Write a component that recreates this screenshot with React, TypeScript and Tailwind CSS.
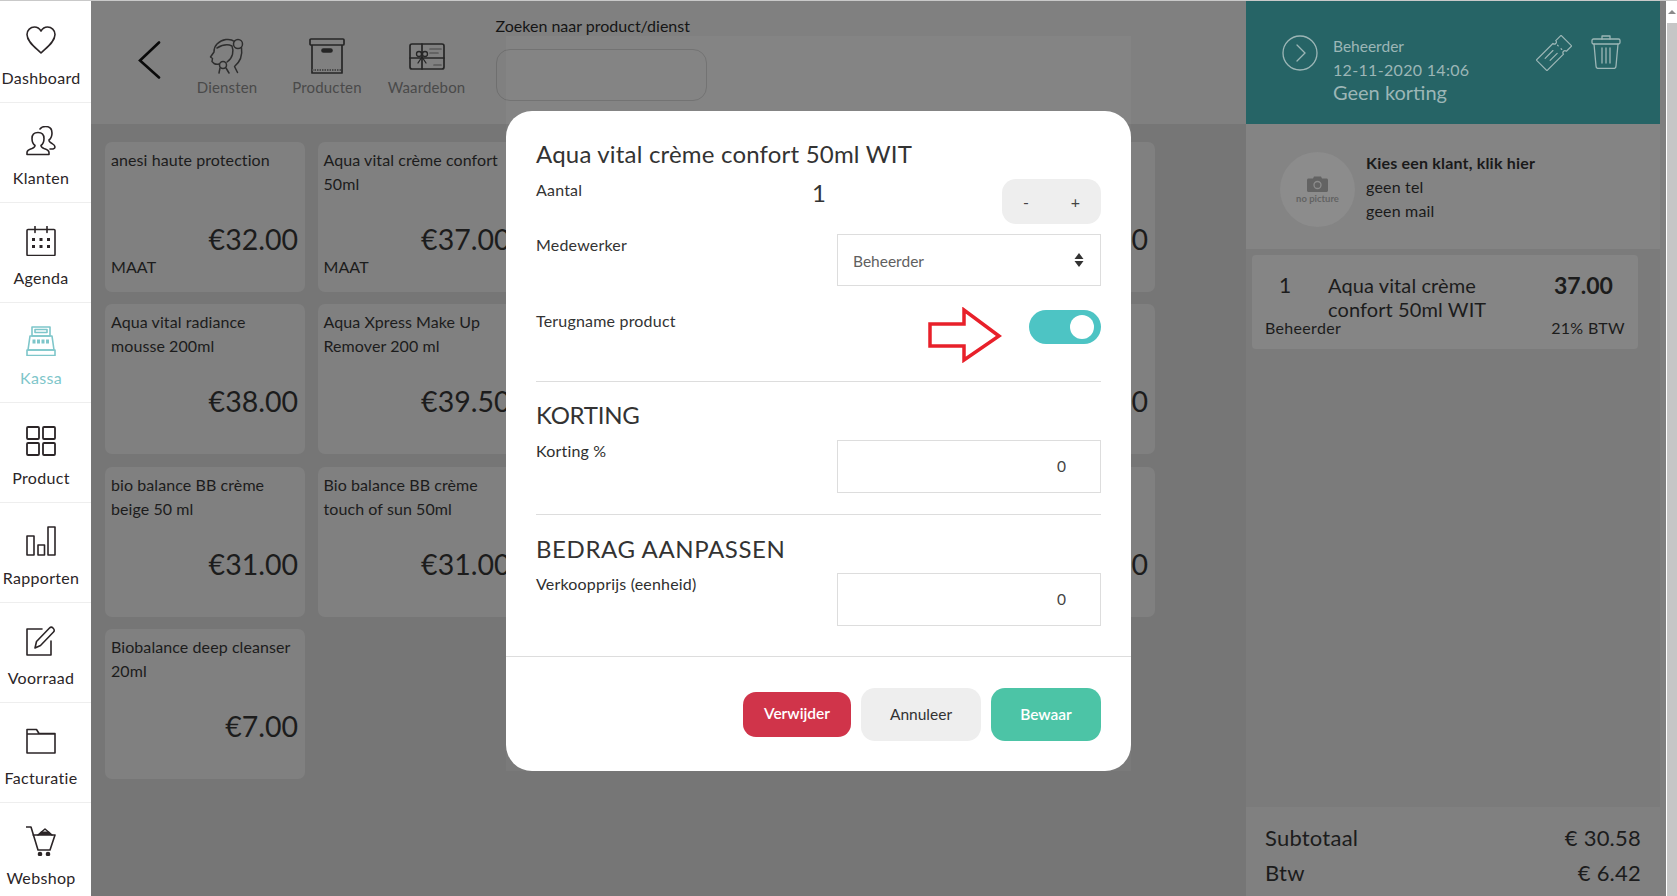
import React from "react";

type Product = { name: string; price: string; tag?: string };

const products: Product[] = [
  { name: "anesi haute protection", price: "€32.00", tag: "MAAT" },
  { name: "Aqua vital crème confort 50ml", price: "€37.00", tag: "MAAT" },
  { name: "", price: "" },
  { name: "", price: "" },
  { name: "", price: "€30.00" },
  { name: "Aqua vital radiance mousse 200ml", price: "€38.00" },
  { name: "Aqua Xpress Make Up Remover 200 ml", price: "€39.50" },
  { name: "", price: "" },
  { name: "", price: "" },
  { name: "", price: "€30.00" },
  { name: "bio balance BB crème beige 50 ml", price: "€31.00" },
  { name: "Bio balance BB crème touch of sun 50ml", price: "€31.00" },
  { name: "", price: "" },
  { name: "", price: "" },
  { name: "", price: "€30.00" },
  { name: "Biobalance deep cleanser 20ml", price: "€7.00" },
];

const NavSvg = ({ children }: { children: React.ReactNode }) => (
  <svg width="30" height="30" viewBox="0 0 30 30" fill="none" stroke="currentColor" strokeWidth="1.6" strokeLinejoin="round" strokeLinecap="round">
    {children}
  </svg>
);

const navItems: { label: string; active?: boolean; icon: React.ReactNode }[] = [
  {
    label: "Dashboard",
    icon: (
      <path d="M15 27C10 22 1 16 1 8.500 1 4 4.500 1 8.500 1 11 1 13.500 2.500 15 5 16.500 2.500 19 1 21.500 1 25.500 1 29 4 29 8.500 29 16 20 22 15 27Z" />
    ),
  },
  {
    label: "Klanten",
    icon: (
      <>
        <path d="M1 28.500v-2c0-2 2-3 5-4 2-.8 3-1.500 3-3-2-1.500-3-4-3-7 0-4 2.500-6 6-6s6 2 6 6c0 3-1 5.500-3 7 0 1.500 1 2.200 3 3 3 1 5 2 5 4v2Z" />
        <path d="M14 3c1-1.500 3-2.500 5.500-2.500 4 0 6.500 2.500 6.500 6.500 0 3-1 5.500-3 7 0 1.500 1 2.500 3 3.500 1.500.8 3 1.500 3 3.500 0 1-.5 1.500-2 2h-3" />
      </>
    ),
  },
  {
    label: "Agenda",
    icon: (
      <>
        <rect x="1" y="3.500" width="28" height="26" rx="1" />
        <path d="M9 0.500v6M21 0.500v6" />
        <g fill="currentColor" stroke="none">
          <rect x="6" y="12" width="3" height="3" />
          <rect x="13.500" y="12" width="3" height="3" />
          <rect x="21" y="12" width="3" height="3" />
          <rect x="6" y="19" width="3" height="3" />
          <rect x="13.500" y="19" width="3" height="3" />
          <rect x="21" y="19" width="3" height="3" />
        </g>
      </>
    ),
  },
  {
    label: "Kassa",
    active: true,
    icon: (
      <>
        <path d="M6 1h18v9H6Z" />
        <path d="M9 3.500h12v3H9Z" />
        <path d="M4 10h22l2 14H2Z" />
        <path d="M1 24h28v5.500H1Z" />
        <g fill="currentColor" stroke="none">
          <rect x="6.500" y="13.500" width="3" height="4" />
          <rect x="11" y="13.500" width="3" height="4" />
          <rect x="15.500" y="13.500" width="3" height="4" />
          <rect x="20" y="13.500" width="3" height="4" />
        </g>
      </>
    ),
  },
  {
    label: "Product",
    icon: (
      <>
        <rect x="1" y="1" width="12" height="12" rx="1" strokeWidth="1.800" />
        <rect x="17" y="1" width="12" height="12" rx="1" strokeWidth="1.800" />
        <rect x="1" y="17" width="12" height="12" rx="1" strokeWidth="1.800" />
        <rect x="17" y="17" width="12" height="12" rx="1" strokeWidth="1.800" />
      </>
    ),
  },
  {
    label: "Rapporten",
    icon: (
      <>
        <rect x="1" y="10" width="7" height="19" />
        <rect x="12" y="19" width="6.500" height="10" />
        <rect x="22" y="1" width="7" height="28" />
      </>
    ),
  },
  {
    label: "Voorraad",
    icon: (
      <>
        <path d="M16 3H1v26h24V15" />
        <path d="M9 22l1.500-6.500L23.500 2c1-1 2.500-1 3.700.2s1.300 2.800.3 3.800L14.500 19.500Z" />
      </>
    ),
  },
  {
    label: "Facturatie",
    icon: <path d="M1 5V27h28V7.500H13L10.500 3.500H1ZM1 8h28" />,
  },
  {
    label: "Webshop",
    icon: (
      <>
        <path d="M0.500 1H5l7 23h12l5-15H7" />
        <path d="M12 9l7-6 7 6" />
        <path d="M15 5.500h8l3 3.500H12Z" fill="currentColor" stroke="none" />
        <circle cx="14" cy="28" r="1.500" fill="currentColor" />
        <circle cx="22" cy="28" r="1.500" fill="currentColor" />
      </>
    ),
  },
];

const Sidebar = () => (
  <nav className="w-[91px] shrink-0 bg-white pt-[2px]">
    {navItems.map((item) => (
      <div
        key={item.label}
        className={`flex h-[100px] flex-col items-center border-b border-[#eeeeee] pr-[9px] pt-[23px] ${item.active ? "text-[#7ec6ca]" : "text-[#2b2527]"}`}
      >
        <NavSvg>{item.icon}</NavSvg>
        <span className="mt-[10px] whitespace-nowrap text-[16px] leading-6 tracking-[0.02em]">{item.label}</span>
      </div>
    ))}
  </nav>
);

const TopBar = () => (
  <header className="flex h-[123px] bg-[#808080]">
    <svg className="ml-[47px] mt-[40px]" width="24" height="38" viewBox="0 0 24 38" fill="none" stroke="#0a0a0a" strokeWidth="2.600" strokeLinecap="round">
      <path d="M21 1.500L2 19.500 21 36.500" />
    </svg>
    <div className="ml-[32px] mt-[37px] flex w-[66px] flex-col items-center">
      <svg width="36" height="36" viewBox="0 0 36 36" fill="none" stroke="#2e2e2e" strokeWidth="1.500" strokeLinecap="round" strokeLinejoin="round">
        <circle cx="29" cy="6" r="4.500" />
        <path d="M25.500 3.500C21 0 13 1 8 6 5.500 8.500 5 11 5 14L1.500 19l2 1.500-.5 3 2 2c2 1 3.500 1 5 .5" />
        <path d="M32.500 9.500c1 7-1 14-7 19l3 6" />
        <path d="M8 10c5-3 11-4 15-2 2 5 1 12-5 16" />
        <circle cx="14" cy="27" r="3.500" />
        <path d="M11 30l-1 5M17 30l3 5" />
      </svg>
      <span className="mt-[3px] text-[15px] leading-5 tracking-[0.01em] text-[#4a4a4a]">Diensten</span>
    </div>
    <div className="ml-[32px] mt-[37px] flex w-[70px] flex-col items-center">
      <svg width="36" height="36" viewBox="0 0 36 36" fill="none" stroke="#262626" strokeWidth="1.700" strokeLinejoin="round">
        <rect x="1" y="1" width="34" height="6" rx="1" />
        <path d="M3 7v28h30V7" />
        <rect x="13" y="11" width="10" height="3" rx="1.500" fill="#262626" />
        <path d="M3 32h30" strokeDasharray="1.500 1" strokeWidth="2" stroke="#4a4a4a" />
      </svg>
      <span className="mt-[3px] whitespace-nowrap text-[15px] leading-5 tracking-[0.01em] text-[#4a4a4a]">Producten</span>
    </div>
    <div className="ml-[25px] mt-[37px] flex w-[79px] flex-col items-center">
      <svg className="mt-[3px]" width="36" height="30" viewBox="0 0 36 30" fill="none" stroke="#262626" strokeWidth="1.700" strokeLinejoin="round" strokeLinecap="round">
        <rect x="1" y="3" width="34" height="25" rx="2" />
        <path d="M13 3v25M1 17h34" />
        <circle cx="10" cy="13" r="2.500" strokeWidth="1.300" />
        <circle cx="16" cy="13" r="2.500" strokeWidth="1.300" />
        <path d="M13 16l-4 6M13 16l4 6" strokeWidth="1.300" />
        <path d="M21 8h11M21 12h8M25 24h7" stroke="#5a5a5a" />
      </svg>
      <span className="mt-[6px] whitespace-nowrap text-[15px] leading-5 tracking-[0.01em] text-[#4a4a4a]">Waardebon</span>
    </div>
    <div className="ml-[29.500px] mt-[15px] w-[211px]">
      <label className="block whitespace-nowrap text-[16px] leading-5 text-[#151515]">Zoeken naar product/dienst</label>
      <input readOnly className="mt-[13px] h-[52px] w-full rounded-[14px] border border-[#6f6f6f] bg-transparent" />
    </div>
  </header>
);

const ProductCard = ({ product }: { product: Product }) => (
  <div className="flex h-[150px] flex-col rounded-[7px] bg-[#808080] pl-[6px] pr-[7px] text-[#1c1c1c]">
    <p className="mt-[6px] h-[48px] text-[16px] leading-6 tracking-[0.005em]">{product.name}</p>
    <p className="mt-[23px] h-[40px] text-right text-[28.500px] leading-10">{product.price}</p>
    <p className="-mt-[4px] text-[16px] leading-6 tracking-[0.005em]">{product.tag}</p>
  </div>
);

const CartPanel = () => (
  <aside className="flex w-[414px] shrink-0 flex-col bg-[#7b7b7b]">
    <div className="flex h-[123px] bg-[#266466] pl-[36px] pt-[34px] text-[#9cb6b6]">
      <svg width="36" height="36" viewBox="0 0 36 36" fill="none" stroke="currentColor" strokeWidth="1.300" strokeLinecap="round">
        <circle cx="18" cy="18" r="17" />
        <path d="M15 10l8 8-8 8" />
      </svg>
      <div className="ml-[15px] w-[203px]">
        <p className="text-[15.500px] leading-[23px]">Beheerder</p>
        <p className="text-[16px] leading-[23px] tracking-[0.02em]">12-11-2020 14:06</p>
        <p className="text-[20px] leading-[23px]">Geen korting</p>
      </div>
      <svg width="36" height="36" viewBox="0 0 36 36" fill="none" stroke="currentColor" strokeWidth="1.200" strokeLinejoin="round" strokeLinecap="round">
        <g transform="rotate(-45 18 18)">
          <path d="M0.500 10.500H24a2 2 0 0 0 4 0h7.500v15H28a2 2 0 0 0-4 0H0.500Z" />
          <path d="M26 15v1M26 20v1M8 15.500h11M10 20.500h10" />
        </g>
      </svg>
      <svg className="ml-[19px]" width="30" height="34" viewBox="0 0 30 34" fill="none" stroke="currentColor" strokeWidth="1.300" strokeLinejoin="round" strokeLinecap="round">
        <path d="M11 4V1h8v3" />
        <rect x="1" y="4" width="28" height="5" rx="1.500" />
        <path d="M3 9l2 22c0 1.500 1 2.500 2.500 2.500h15c1.500 0 2.500-1 2.500-2.500l2-22" />
        <path d="M11 13v15M15 13v15M19 13v15" />
      </svg>
    </div>
    <div className="flex h-[125px] bg-[#848484] pl-[34px] pt-[28px]">
      <div className="flex h-[75px] w-[75px] flex-col items-center justify-center rounded-full bg-[#8c8c8c]">
        <svg width="21" height="16" viewBox="0 0 21 16" className="mt-[3px]">
          <path fill="#636363" d="M1.500 2.500H6L7 0.500h7l1 2h4.500c.800 0 1.500.700 1.500 1.500v10.500c0 .800-.700 1.500-1.500 1.500h-18C.700 16 0 15.300 0 14.500V4c0-.800.700-1.500 1.500-1.500Z" />
          <circle cx="10.500" cy="9" r="3.500" fill="none" stroke="#8c8c8c" strokeWidth="1.300" />
        </svg>
        <span className="text-[9.500px] font-bold leading-[14px] text-[#636363]">no picture</span>
      </div>
      <div className="ml-[11px] -mt-px text-[16px] leading-6 tracking-[0.012em] text-[#1a1a1a]">
        <p className="font-bold">Kies een klant, klik hier</p>
        <p>geen tel</p>
        <p>geen mail</p>
      </div>
    </div>
    <div className="mx-[6px] mt-[6px] h-[94px] w-[386px] rounded-[4px] bg-[#858585] text-[#1c1c1c]">
      <div className="flex pt-[18px]">
        <span className="ml-[27px] w-[49px] text-[21px] leading-6">1</span>
        <p className="w-[210px] text-[20px] leading-6 tracking-[0.005em]">Aqua vital crème confort 50ml WIT</p>
        <span className="ml-[16px] text-[23px] font-bold leading-6">37.00</span>
      </div>
      <div className="-mt-[5px] flex justify-between pl-[13px] pr-[13px] text-[16px] leading-6 tracking-[0.02em]">
        <span>Beheerder</span>
        <span>21% BTW</span>
      </div>
    </div>
    <div className="mt-auto h-[89px] bg-[#808080] px-[19px] pt-[15px] text-[22px] leading-8 tracking-[0.01em] text-[#1c1c1c]">
      <div className="flex justify-between">
        <span>Subtotaal</span>
        <span>€ 30.58</span>
      </div>
      <div className="mt-[3px] flex justify-between">
        <span>Btw</span>
        <span>€ 6.42</span>
      </div>
    </div>
  </aside>
);

const NumberField = ({ label }: { label: string }) => (
  <div className="flex items-start justify-between">
    <span className="-mt-px text-[16px] leading-6 tracking-[0.012em] text-[#2f2f2f]">{label}</span>
    <input
      readOnly
      value="0"
      className="h-[53px] w-[264px] border border-[#dddddd] pb-[2px] pr-[34px] text-right text-[15.500px] text-[#444444] outline-none"
    />
  </div>
);

const Modal = () => (
  <div className="absolute left-[415px] top-[110px] w-[625px] rounded-[26px] bg-white text-[#333333]">
    <div className="px-[30px] pt-[27px]">
      <h2 className="text-[24px] leading-8 tracking-[0.008em]">Aqua vital crème confort 50ml WIT</h2>
      <div className="mt-[9px] flex items-start">
        <span className="-mt-px w-[271px] text-[16px] leading-6 tracking-[0.012em]">Aantal</span>
        <span className="w-[24px] text-center text-[24px] leading-7">1</span>
        <div className="ml-auto flex h-[45px] w-[99px] items-center justify-around rounded-[14px] bg-[#eeeeee] text-[16px] text-[#444444]">
          <span>-</span>
          <span>+</span>
        </div>
      </div>
      <div className="mt-[10px] flex items-start justify-between">
        <span className="-mt-px text-[16px] leading-6 tracking-[0.012em]">Medewerker</span>
        <div className="flex h-[52px] w-[264px] items-center justify-between border border-[#dddddd] pl-[15px] pr-[16px] text-[15.500px] text-[#5f5f5f]">
          <span className="pt-[3px]">Beheerder</span>
          <svg width="10" height="14" viewBox="0 0 10 14" fill="#333333">
            <path d="M5 0l4.500 6h-9ZM5 14L.5 8h9Z" />
          </svg>
        </div>
      </div>
      <div className="relative mt-6 flex items-start justify-between">
        <span className="-mt-px text-[16px] leading-6 tracking-[0.012em]">Terugname product</span>
        <div className="flex h-[34px] w-[72px] items-center justify-end rounded-full bg-[#4dc4c4] pr-[7px]">
          <div className="h-[24px] w-[24px] rounded-full bg-white" />
        </div>
        <svg className="absolute left-[392px] -top-[3px]" width="74" height="56" viewBox="0 0 74 56" fill="none" stroke="#e8202a" strokeWidth="3.500" strokeLinejoin="miter">
          <path d="M2 17H36V3L71 29 36 53V39H2Z" />
        </svg>
      </div>
      <div className="mt-[37px] border-t border-[#dddddd]" />
      <h3 className="mt-[17px] text-[24px] leading-8 tracking-[-0.01em]">KORTING</h3>
      <div className="mt-[9px]">
        <NumberField label="Korting %" />
      </div>
      <div className="mt-[21px] border-t border-[#dddddd]" />
      <h3 className="mt-[18px] text-[24px] leading-8 tracking-[0.025em]">BEDRAG AANPASSEN</h3>
      <div className="mt-[8px]">
        <NumberField label="Verkoopprijs (eenheid)" />
      </div>
    </div>
    <div className="mt-[30px] flex items-center justify-end gap-[10px] border-t border-[#dddddd] px-[30px] pb-[30px] pt-[31px] text-[15.500px]">
      <button className="h-[45px] w-[108px] rounded-[13px] bg-[#d0344a] pb-[2px] font-semibold text-white">Verwijder</button>
      <button className="h-[53px] w-[120px] rounded-[14px] bg-[#eeeeee] text-[#333333]">Annuleer</button>
      <button className="h-[53px] w-[110px] rounded-[14px] bg-[#4cc4a6] font-semibold text-white">Bewaar</button>
    </div>
  </div>
);

export default function App() {
  return (
    <div className="flex h-[896px] overflow-hidden border-t border-[#c9c9c9] font-['Lato',sans-serif]">
      <Sidebar />
      <div className="relative flex min-w-0 flex-1 bg-[#7f7f7f]">
        <main className="w-[1155px] shrink-0 bg-[#767676]">
          <TopBar />
          <div className="grid grid-cols-[repeat(5,200px)] gap-x-[12.500px] gap-y-[12.500px] pl-[14px] pt-[17.700px]">
            {products.map((product, i) => (
              <ProductCard key={i} product={product} />
            ))}
          </div>
        </main>
        <CartPanel />
        {/* ghost of the dialog behind the white box */}
        <div className="absolute left-[415px] top-[35px] h-[735px] w-[625px] bg-white/[0.03]" />
        <Modal />
      </div>
      <div className="flex w-[11px] shrink-0 flex-col border-l border-white bg-[#c6c6c6]">
        <div className="flex h-[22px] items-center justify-center bg-white">
          <div className="h-0 w-0 border-x-[4px] border-b-[4px] border-x-transparent border-b-[#8a8a8a]" />
        </div>
      </div>
    </div>
  );
}
